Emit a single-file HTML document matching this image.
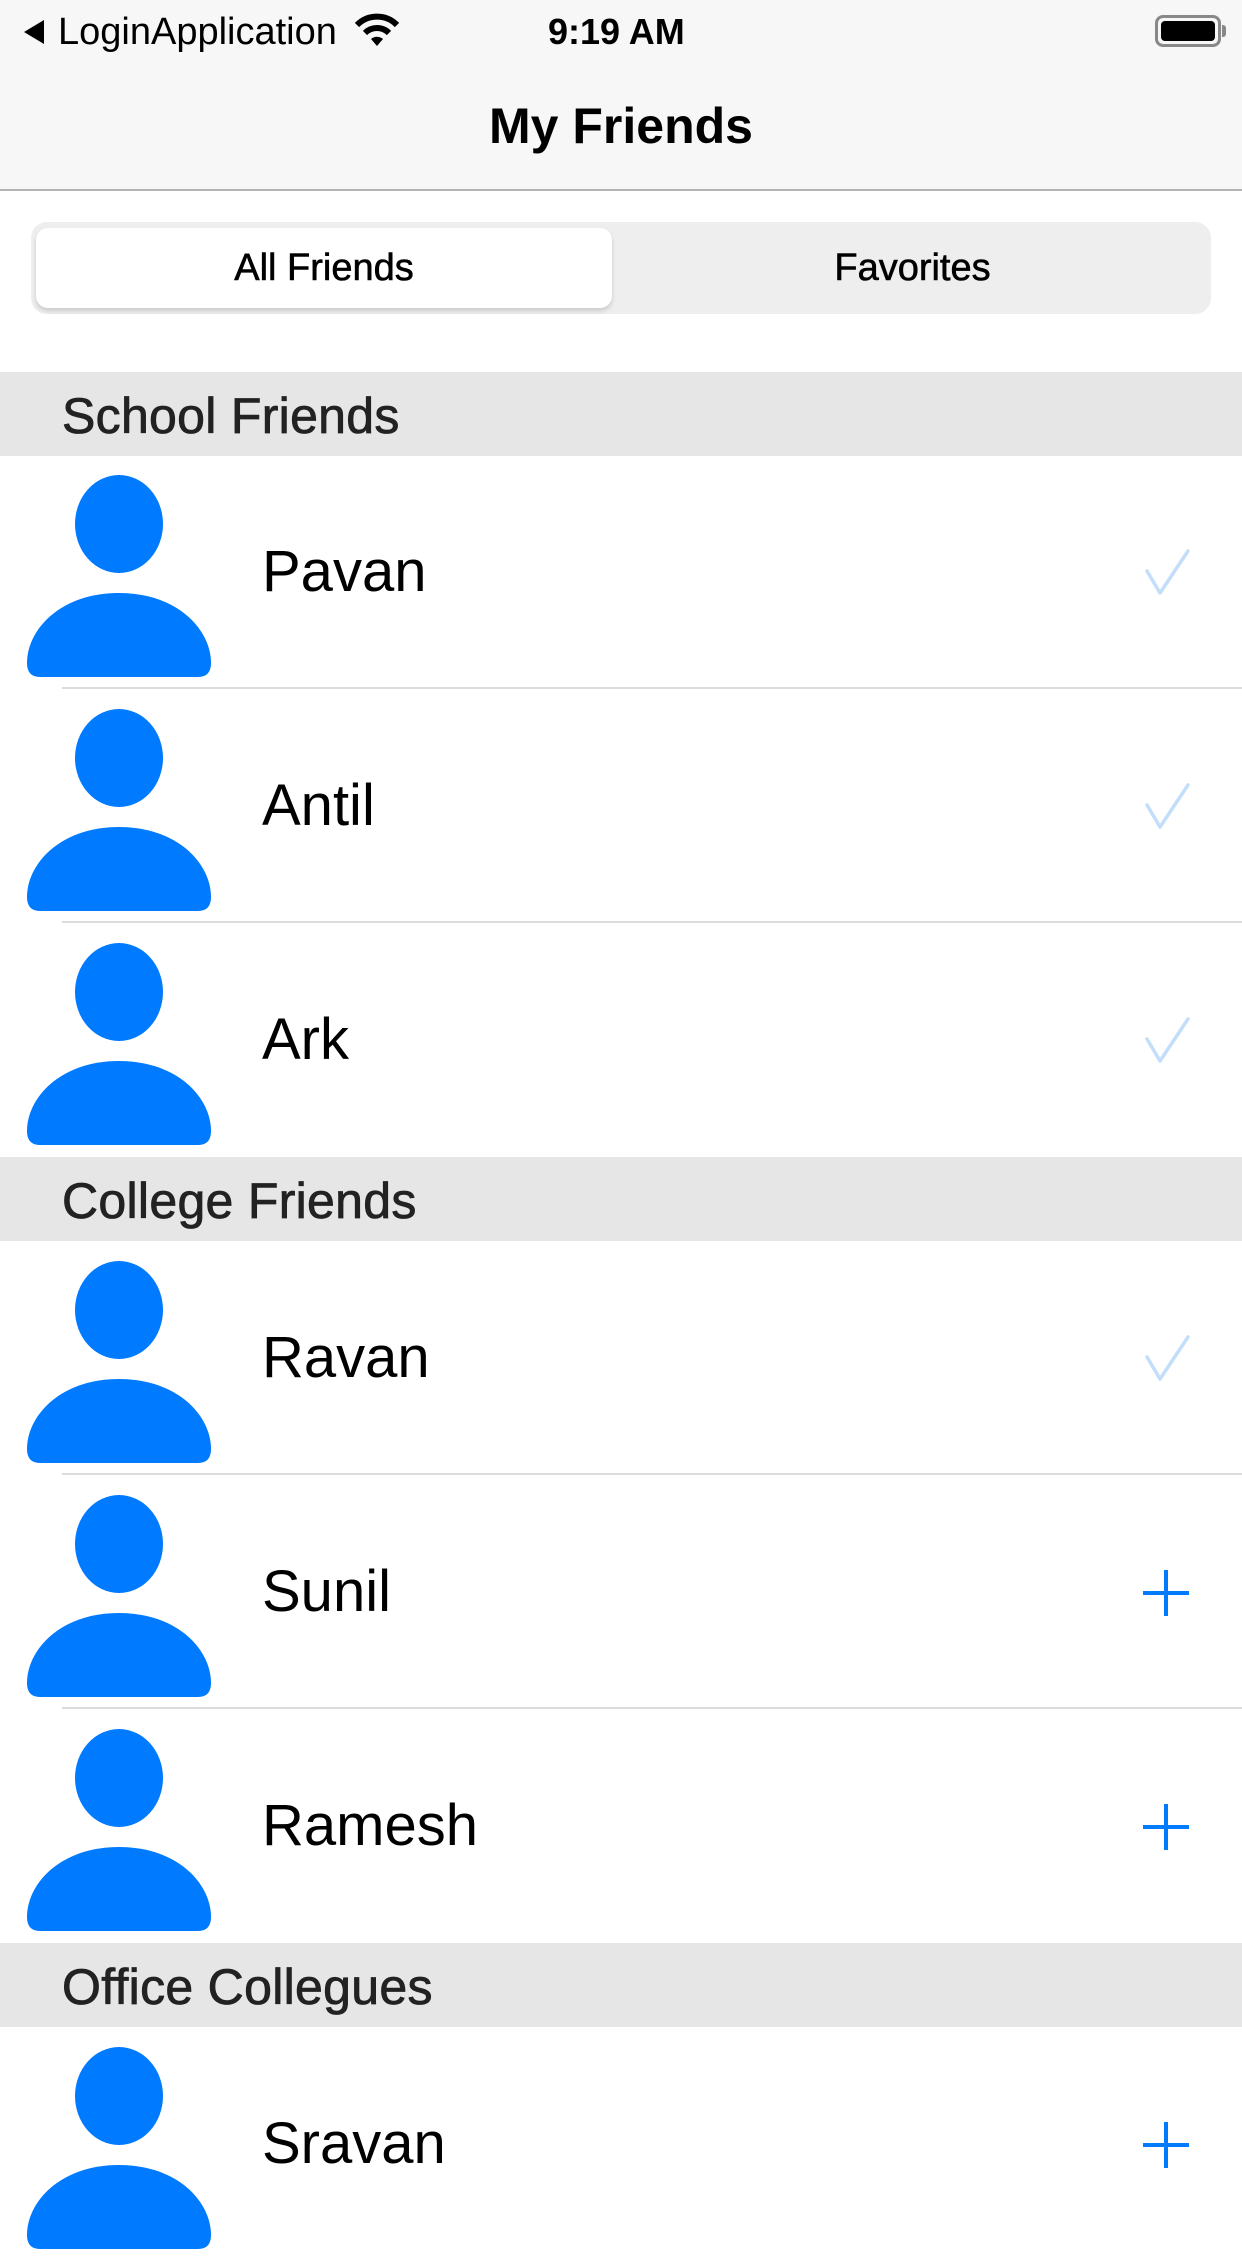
<!DOCTYPE html>
<html><head><meta charset="utf-8"><style>
*{margin:0;padding:0;box-sizing:border-box}
body{width:1242px;height:2208px;overflow:hidden;background:#fff;font-family:"Liberation Sans",sans-serif;position:relative}
.abs{position:absolute}
.hdr{position:absolute;left:0;width:1242px;height:84px;background:#e6e6e6;font-size:50px;color:#222;padding-left:62px;line-height:88px;-webkit-text-stroke:0.8px #222;letter-spacing:0.3px}
.row{position:absolute;left:0;width:1242px;height:234px}
.row .sep{position:absolute;left:62px;right:0;bottom:0;height:2px;background:#dcdcdc}
.row .name{position:absolute;left:262px;top:0;line-height:234px;font-size:58px;color:#000}
.row svg.av{position:absolute;left:0;top:0}
.row svg.acc{position:absolute;left:1140px;top:92px}
</style></head><body>
<div class="abs" style="left:0;top:0;width:1242px;height:191px;background:#f7f7f7;border-bottom:2px solid #b4b4b4"></div>
<svg class="abs" style="left:22px;top:19px" width="24" height="26"><polygon points="22,1 22,25 2,13" fill="#000"/></svg>
<div class="abs" style="left:58px;top:10px;font-size:38px;line-height:44px">LoginApplication</div>
<svg class="abs" style="left:354px;top:12px" width="46" height="36" viewBox="0 0 46 36"><path d="M3 13 A28 28 0 0 1 43 13" stroke="#000" stroke-width="6" fill="none"/><path d="M11 21 A17 17 0 0 1 35 21" stroke="#000" stroke-width="6" fill="none"/><path d="M17 27 L23 34 L29 27 A9 9 0 0 0 17 27Z" fill="#000"/></svg>
<div class="abs" style="left:548px;top:10px;font-size:36px;line-height:44px;font-weight:bold">9:19 AM</div>
<div class="abs" style="left:1155px;top:15px;width:66px;height:32px;border:3px solid #888;border-radius:8px;padding:3px"><div style="width:100%;height:100%;background:#000;border-radius:4px"></div></div>
<div class="abs" style="left:1222px;top:25px;width:4px;height:12px;background:#888;border-radius:0 3px 3px 0"></div>
<div class="abs" style="left:0;top:98px;width:1242px;text-align:center;font-size:50px;font-weight:bold;line-height:56px">My Friends</div>
<div class="abs" style="left:31px;top:222px;width:1180px;height:92px;background:#eeeeee;border-radius:16px"></div>
<div class="abs" style="left:36px;top:228px;width:576px;height:80px;background:#fff;border-radius:12px;box-shadow:0 3px 5px rgba(0,0,0,.15)"></div>
<div class="abs" style="left:36px;top:228px;width:576px;line-height:80px;text-align:center;font-size:38px;-webkit-text-stroke:0.6px #000">All Friends</div>
<div class="abs" style="left:620px;top:228px;width:585px;line-height:80px;text-align:center;font-size:38px;-webkit-text-stroke:0.6px #000">Favorites</div>

<div class="hdr" style="top:372px">School Friends</div>
<div class="hdr" style="top:1157px">College Friends</div>
<div class="hdr" style="top:1943px">Office Collegues</div>

<div id="rows"></div>
<script>
var rows=[[455,"Pavan",0,1],[689,"Antil",0,1],[923,"Ark",0,0],[1241,"Ravan",0,1],[1475,"Sunil",1,1],[1709,"Ramesh",1,0],[2027,"Sravan",1,0]];
var h="";
rows.forEach(function(r){
 var acc=r[2]?'<svg class="acc" width="52" height="52"><path d="M26 3V49M3 26H49" stroke="#007aff" stroke-width="4"/></svg>':'<svg class="acc" width="52" height="52"><path d="M7 24 L20 46 L48 4" stroke="#c3defb" stroke-width="3.5" fill="none" stroke-linecap="round" stroke-linejoin="round"/></svg>';
 h+='<div class="row" style="top:'+r[0]+'px"><svg class="av" width="240" height="234"><ellipse cx="119" cy="69" rx="44" ry="49" fill="#007aff"/><path d="M27 208 C27 175 60 138 119 138 C178 138 211 175 211 208 Q211 222 198 222 L40 222 Q27 222 27 208Z" fill="#007aff"/></svg><div class="name">'+r[1]+'</div>'+acc+(r[3]?'<div class="sep"></div>':'')+'</div>';
});
document.getElementById("rows").innerHTML=h;
</script>
</body></html>
